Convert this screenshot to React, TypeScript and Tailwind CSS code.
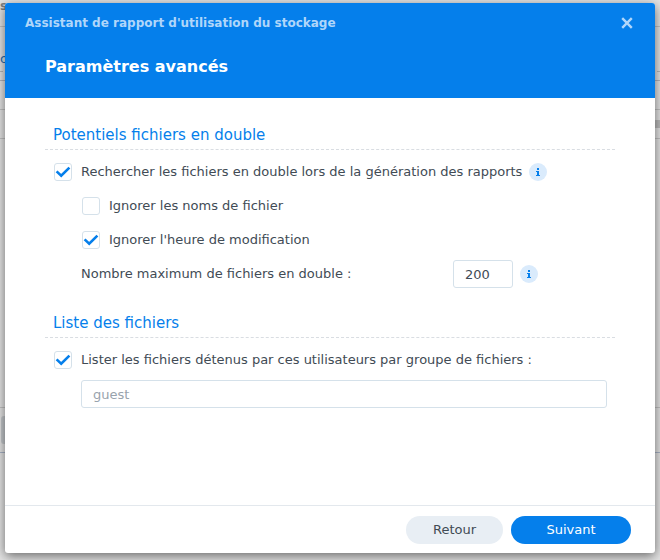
import { useState, type ReactNode } from "react";

function Section({ title, children }: { title: string; children: ReactNode }) {
  return (
    <section>
      <h2 className="flex h-[31px] items-center border-b border-dashed border-[#d9dde2] px-2 pt-0.5 text-[15px] leading-5 text-[#057feb]">
        {title}
      </h2>
      <div className="pl-2 pt-[5px]">{children}</div>
    </section>
  );
}

function Check({ label, initial = false }: { label: string; initial?: boolean }) {
  const [checked, setChecked] = useState(initial);
  return (
    <label className="flex items-center gap-[9px] pl-px">
      <span className="grid size-[18px] shrink-0">
        <input
          type="checkbox"
          checked={checked}
          onChange={(e) => setChecked(e.target.checked)}
          className="col-start-1 row-start-1 size-[18px] appearance-none rounded-[3px] border border-[#d5e1ea] bg-white"
        />
        {checked && (
          <svg viewBox="0 0 18 18" className="pointer-events-none col-start-1 row-start-1 size-[18px]" aria-hidden="true">
            <path d="M2.6 8.4 7.2 12.7 15.4 4.6" fill="none" stroke="#057feb" strokeWidth="2.6" />
          </svg>
        )}
      </span>
      <span>{label}</span>
    </label>
  );
}

function Info() {
  return (
    <button type="button" aria-label="Informations" className="size-[18px] shrink-0 rounded-full bg-[#daebfc]">
      <svg viewBox="0 0 18 18" className="size-[18px]" aria-hidden="true">
        <path d="M8 5h2v2H8zM7 8h3v4h1v1H7v-1h1V9H7z" fill="#057feb" />
      </svg>
    </button>
  );
}

function Backdrop() {
  return (
    <div aria-hidden="true" className="col-start-1 row-start-1 overflow-hidden bg-[#e4e4e4] text-[#808080]">
      <div className="h-[27px] border-b border-[#c2c2c2] text-[12px] font-bold leading-3">s</div>
      <div className="h-[45px] border-b border-dashed border-[#b8b8b8] pt-[22px] text-[13px] leading-5 text-[#2f70ad]">o</div>
      <div className="h-[9px] border-b border-[#b4b4bc]" />
      <div className="h-[29px] border-b border-[#c2c2c2]" />
      <div className="flex h-[29px] items-center justify-end border-b border-[#c2c2c2]">
        <div className="h-2 w-8 bg-[#bcbcbc]" />
      </div>
      <div className="h-[269px] border-b border-[#c2c2c2]" />
      <div className="h-[45px] border-b border-[#a9b3c6] pt-2">
        <div className="ml-px h-7 w-20 rounded-[3px] bg-[#c5c8cc]" />
      </div>
    </div>
  );
}

export default function App() {
  const [max, setMax] = useState("200");
  return (
    <div className="grid min-h-screen grid-cols-1 font-['DejaVu_Sans',Verdana,sans-serif] text-[13px] leading-[18px] text-[#414b55]">
      <Backdrop />
      <main className="z-10 col-start-1 row-start-1 mx-[5px] mb-[7px] mt-[3px] flex flex-col overflow-hidden rounded-[3px] bg-white shadow-[0_3px_12px_rgba(0,0,0,0.55)]">
        <header className="h-[95px] bg-[#057feb] px-5 pt-2.5">
          <div className="flex h-5 items-center justify-between">
            <div className="text-[12px] font-bold text-[#b0d6fa]">Assistant de rapport d'utilisation du stockage</div>
            <button type="button" aria-label="Fermer" className="grid size-4 place-items-center">
              <svg viewBox="0 0 12 12" className="size-3" aria-hidden="true">
                <path d="M1.2 1.2 10.8 10.8M10.8 1.2 1.2 10.8" stroke="#b0d6fa" strokeWidth="2.4" />
              </svg>
            </button>
          </div>
          <h1 className="mt-[22px] pl-5 text-[16px] font-bold leading-6 text-white">Paramètres avancés</h1>
        </header>
        <div className="flex grow flex-col gap-4 px-10 pt-[21px]">
          <Section title="Potentiels fichiers en double">
            <div className="flex h-[34px] items-center gap-[7px]">
              <Check label="Rechercher les fichiers en double lors de la génération des rapports" initial />
              <Info />
            </div>
            <div className="flex h-[34px] items-center pl-7">
              <Check label="Ignorer les noms de fichier" />
            </div>
            <div className="flex h-[34px] items-center pl-7">
              <Check label="Ignorer l'heure de modification" initial />
            </div>
            <div className="flex h-[34px] items-center pl-7">
              <label htmlFor="max" className="w-[372px]">Nombre maximum de fichiers en double :</label>
              <input id="max" value={max} onChange={(e) => setMax(e.target.value)} className="h-7 w-[60px] rounded-[3px] border border-[#d5e1ea] bg-white px-[11px]" />
              <span className="ml-[7px] flex"><Info /></span>
            </div>
          </Section>
          <Section title="Liste des fichiers">
            <div className="flex h-[34px] items-center">
              <Check label="Lister les fichiers détenus par ces utilisateurs par groupe de fichiers :" initial />
            </div>
            <div className="pl-7 pr-2 pt-[3px]">
              <input aria-label="Utilisateurs" placeholder="guest" className="block h-7 w-full rounded-[3px] border border-[#d5e1ea] bg-white px-[11px] placeholder:text-[#98a3ad]" />
            </div>
          </Section>
        </div>
        <footer className="flex h-12 items-center justify-end gap-2 border-t border-[#e3e8ed] px-6">
          <button type="button" className="h-7 w-[97px] rounded-full bg-[#e8eef4]">Retour</button>
          <button type="button" className="h-7 w-[120px] rounded-full bg-[#057feb] text-white">Suivant</button>
        </footer>
      </main>
    </div>
  );
}
